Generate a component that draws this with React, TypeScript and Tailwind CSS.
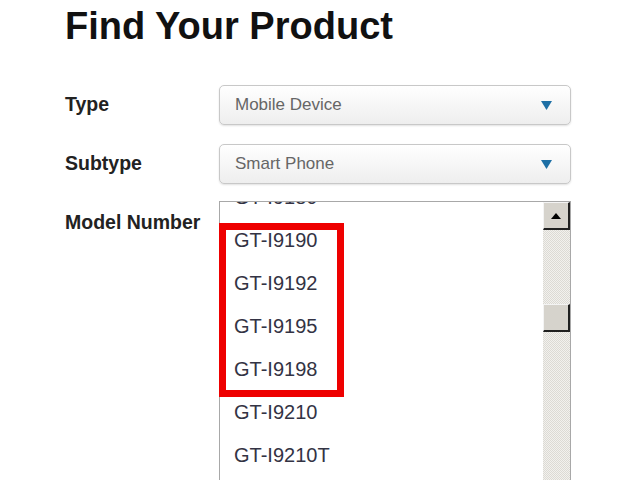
import React from "react";

const items = ["GT-I9180", "GT-I9190", "GT-I9192", "GT-I9195", "GT-I9198", "GT-I9210", "GT-I9210T", "GT-I9220"];

function Select({ value }: { value: string }) {
  return (
    <div className="flex h-[40px] w-[352px] items-center justify-between rounded-[5px] border border-[#c8c8c8] bg-gradient-to-b from-[#ffffff] to-[#eeeeee] pl-[15px] pr-[18px] shadow-[0_1px_2px_rgba(0,0,0,0.12)]">
      <span className="text-[17px] text-[#666666]">{value}</span>
      <svg width="11" height="9" viewBox="0 0 11 9">
        <polygon points="0,0 11,0 5.5,9" fill="#1d6fa5" />
      </svg>
    </div>
  );
}

function Btn({ children }: { children?: React.ReactNode }) {
  return (
    <div className="flex h-[28px] w-[27px] items-center justify-center border-t border-l border-t-[#f4f4f4] border-l-[#f4f4f4] border-r-2 border-b-2 border-r-[#202020] border-b-[#202020] bg-[#d6d3cc]">
      {children}
    </div>
  );
}

export default function App() {
  return (
    <div
      className="h-[480px] w-[640px] overflow-hidden bg-white pl-[65px]"
      style={{ fontFamily: '"Liberation Sans", Arial, sans-serif' }}
    >
      <h1 className="pt-[4px] text-[38px] font-bold leading-[44px] text-[#111111]">
        Find Your Product
      </h1>
      <div className="mt-[37px] flex items-center">
        <div className="w-[154px] text-[19.5px] font-bold text-[#222222]">Type</div>
        <Select value="Mobile Device" />
      </div>
      <div className="mt-[19px] flex items-center">
        <div className="w-[154px] text-[19.5px] font-bold text-[#222222]">Subtype</div>
        <Select value="Smart Phone" />
      </div>
      <div className="mt-[17px] flex items-start">
        <div className="w-[154px] pt-[9px] text-[19.5px] font-bold leading-[24px] text-[#222222]">Model Number</div>
        <div className="relative flex h-[300px] w-[352px] border border-[#a8a8a8] bg-white">
          <div className="flex-1 overflow-hidden">
            <div className="-mt-[27px]">
              {items.map((it) => (
                <div key={it} className="flex h-[43px] items-center pl-[14px] text-[20px] text-[#333344]">
                  {it}
                </div>
              ))}
            </div>
          </div>
          <div
            className="flex w-[27px] flex-col"
            style={{
              backgroundColor: "#f2f1ee",
              backgroundImage:
                "linear-gradient(45deg, #dcdad4 25%, transparent 25%, transparent 75%, #dcdad4 75%), linear-gradient(45deg, #dcdad4 25%, transparent 25%, transparent 75%, #dcdad4 75%)",
              backgroundSize: "2px 2px",
              backgroundPosition: "0 0, 1px 1px",
            }}
          >
            <Btn>
              <svg width="10" height="6" viewBox="0 0 10 6">
                <polygon points="5,0 10,6 0,6" fill="#000000" />
              </svg>
            </Btn>
            <div className="mt-[74px]">
              <Btn />
            </div>
          </div>
          <div className="absolute left-[-1px] top-[21px] h-[174px] w-[125px] border-[7px] border-[#ee0000]" />
        </div>
      </div>
    </div>
  );
}
